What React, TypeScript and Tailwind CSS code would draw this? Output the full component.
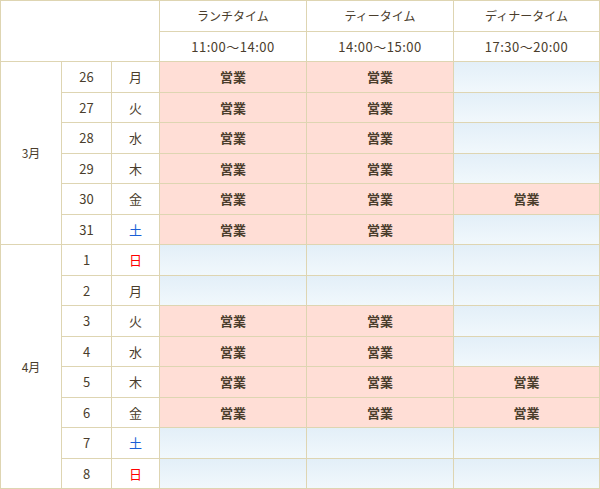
const rows = [
  { d: "26", w: "月", l: true, t: true, n: false },
  { d: "27", w: "火", l: true, t: true, n: false },
  { d: "28", w: "水", l: true, t: true, n: false },
  { d: "29", w: "木", l: true, t: true, n: false },
  { d: "30", w: "金", l: true, t: true, n: true },
  { d: "31", w: "土", l: true, t: true, n: false },
  { d: "1", w: "日", l: false, t: false, n: false },
  { d: "2", w: "月", l: false, t: false, n: false },
  { d: "3", w: "火", l: true, t: true, n: false },
  { d: "4", w: "水", l: true, t: true, n: false },
  { d: "5", w: "木", l: true, t: true, n: true },
  { d: "6", w: "金", l: true, t: true, n: true },
  { d: "7", w: "土", l: false, t: false, n: false },
  { d: "8", w: "日", l: false, t: false, n: false },
];

function Slot({ open }: { open: boolean }) {
  return open ? (
    <div className="flex items-center justify-center bg-[#ffded6] text-[13px] font-bold">営業</div>
  ) : (
    <div className="bg-gradient-to-b from-[#e3eff8] to-[#f1f8fc]" />
  );
}

export default function App() {
  return (
    <div
      className="grid h-[489px] w-[600px] gap-px border border-[#ded5b2] bg-[#ded5b2] text-[12px] text-[#4a3d2c]"
      style={{
        fontFamily: '"Noto Sans CJK JP", "Noto Sans", sans-serif',
        gridTemplateColumns: "60px 49px 47px 146px 146px 145px",
        gridTemplateRows: "30px 29px " + "30px 29px ".repeat(7),
      }}
    >
      <div className="col-span-3 row-span-2 bg-white" />
      <div className="flex items-center justify-center bg-white">ランチタイム</div>
      <div className="flex items-center justify-center bg-white">ティータイム</div>
      <div className="flex items-center justify-center bg-white">ディナータイム</div>
      <div className="flex items-center justify-center bg-white text-[13px] tracking-[0.5px]">11:00〜14:00</div>
      <div className="flex items-center justify-center bg-white text-[13px] tracking-[0.5px]">14:00〜15:00</div>
      <div className="flex items-center justify-center bg-white text-[13px] tracking-[0.5px]">17:30〜20:00</div>
      {rows.map((r, i) => (
        <div key={i} className="contents">
          {i === 0 && (
            <div className="row-span-6 flex items-center justify-center bg-white">3月</div>
          )}
          {i === 6 && (
            <div className="row-span-8 flex items-center justify-center bg-white">4月</div>
          )}
          <div className="flex items-center justify-center bg-white text-[13px]">{r.d}</div>
          <div
            className={
              "flex items-center justify-center bg-white text-[13px] " +
              (r.w === "土" ? "text-[#1a5fd6]" : r.w === "日" ? "text-[#ff0000]" : "")
            }
          >
            {r.w}
          </div>
          <Slot open={r.l} />
          <Slot open={r.t} />
          <Slot open={r.n} />
        </div>
      ))}
    </div>
  );
}
